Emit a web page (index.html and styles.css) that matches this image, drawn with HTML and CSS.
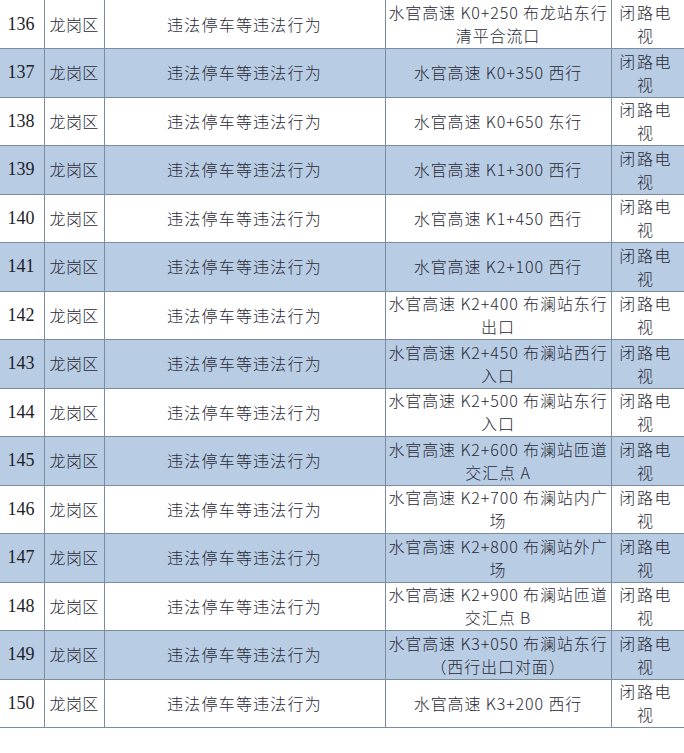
FILE: index.html
```html
<!DOCTYPE html>
<html lang="zh-CN">
<head>
<meta charset="utf-8">
<title>违法停车监控点</title>
<link rel="stylesheet" href="styles.css">
</head>
<body>
<table class="sheet">
  <colgroup>
    <col class="c-no"><col class="c-area"><col class="c-type"><col class="c-place"><col class="c-dev">
  </colgroup>
  <tbody>
    <tr><td class="no">136</td><td class="area">龙岗区</td><td class="type">违法停车等违法行为</td><td class="place">水官高速 K0+250 布龙站东行<br>清平合流口</td><td class="dev">闭路电视</td></tr>
    <tr class="alt"><td class="no">137</td><td class="area">龙岗区</td><td class="type">违法停车等违法行为</td><td class="place">水官高速 K0+350 西行</td><td class="dev">闭路电视</td></tr>
    <tr><td class="no">138</td><td class="area">龙岗区</td><td class="type">违法停车等违法行为</td><td class="place">水官高速 K0+650 东行</td><td class="dev">闭路电视</td></tr>
    <tr class="alt"><td class="no">139</td><td class="area">龙岗区</td><td class="type">违法停车等违法行为</td><td class="place">水官高速 K1+300 西行</td><td class="dev">闭路电视</td></tr>
    <tr><td class="no">140</td><td class="area">龙岗区</td><td class="type">违法停车等违法行为</td><td class="place">水官高速 K1+450 西行</td><td class="dev">闭路电视</td></tr>
    <tr class="alt"><td class="no">141</td><td class="area">龙岗区</td><td class="type">违法停车等违法行为</td><td class="place">水官高速 K2+100 西行</td><td class="dev">闭路电视</td></tr>
    <tr><td class="no">142</td><td class="area">龙岗区</td><td class="type">违法停车等违法行为</td><td class="place">水官高速 K2+400 布澜站东行<br>出口</td><td class="dev">闭路电视</td></tr>
    <tr class="alt"><td class="no">143</td><td class="area">龙岗区</td><td class="type">违法停车等违法行为</td><td class="place">水官高速 K2+450 布澜站西行<br>入口</td><td class="dev">闭路电视</td></tr>
    <tr><td class="no">144</td><td class="area">龙岗区</td><td class="type">违法停车等违法行为</td><td class="place">水官高速 K2+500 布澜站东行<br>入口</td><td class="dev">闭路电视</td></tr>
    <tr class="alt"><td class="no">145</td><td class="area">龙岗区</td><td class="type">违法停车等违法行为</td><td class="place">水官高速 K2+600 布澜站匝道<br>交汇点 A</td><td class="dev">闭路电视</td></tr>
    <tr><td class="no">146</td><td class="area">龙岗区</td><td class="type">违法停车等违法行为</td><td class="place">水官高速 K2+700 布澜站内广<br>场</td><td class="dev">闭路电视</td></tr>
    <tr class="alt"><td class="no">147</td><td class="area">龙岗区</td><td class="type">违法停车等违法行为</td><td class="place">水官高速 K2+800 布澜站外广<br>场</td><td class="dev">闭路电视</td></tr>
    <tr><td class="no">148</td><td class="area">龙岗区</td><td class="type">违法停车等违法行为</td><td class="place">水官高速 K2+900 布澜站匝道<br>交汇点 B</td><td class="dev">闭路电视</td></tr>
    <tr class="alt"><td class="no">149</td><td class="area">龙岗区</td><td class="type">违法停车等违法行为</td><td class="place">水官高速 K3+050 布澜站东行<br>（西行出口对面）</td><td class="dev">闭路电视</td></tr>
    <tr><td class="no">150</td><td class="area">龙岗区</td><td class="type">违法停车等违法行为</td><td class="place">水官高速 K3+200 西行</td><td class="dev">闭路电视</td></tr>
  </tbody>
</table>
</body>
</html>
```
FILE: styles.css
```css
html, body {
  margin: 0;
  padding: 0;
  background: #ffffff;
}
body {
  font-family: "Noto Sans CJK SC", "Noto Sans", sans-serif;
  color: #2a2a36;
}
.sheet {
  border-collapse: collapse;
  table-layout: fixed;
  width: 684px;
}
.c-no { width: 44px; }
.c-area { width: 60px; }
.c-type { width: 281px; }
.c-place { width: 226px; }
.c-dev { width: 73px; }

.sheet tr {
  height: 48.5px;
}
.sheet tr.alt td {
  background: #b8cce4;
}
.sheet td {
  border: 1px solid #7b8ba0;
  padding: 0;
  font-size: 16px;
  line-height: 23px;
  font-weight: 300;
  vertical-align: middle;
  white-space: nowrap;
  overflow: hidden;
}
.sheet tr:first-child td { border-top: none; }
.sheet td:first-child { border-left: none; }
.sheet td:last-child { border-right: none; }

.sheet td.no {
  font-family: "Liberation Serif", serif;
  font-size: 18px;
  font-weight: 400;
  color: #1e1e28;
  text-align: right;
  padding-right: 9px;
}
.sheet td.area {
  padding-left: 5px;
  letter-spacing: 0.4px;
}
.sheet td.type {
  text-align: center;
  letter-spacing: 1.2px;
}
.sheet td.place {
  text-align: center;
  letter-spacing: 0.9px;
}
.sheet td.dev {
  text-align: center;
  letter-spacing: 1.6px;
  white-space: normal;
  padding: 0 10px 0 6px;
}
```
